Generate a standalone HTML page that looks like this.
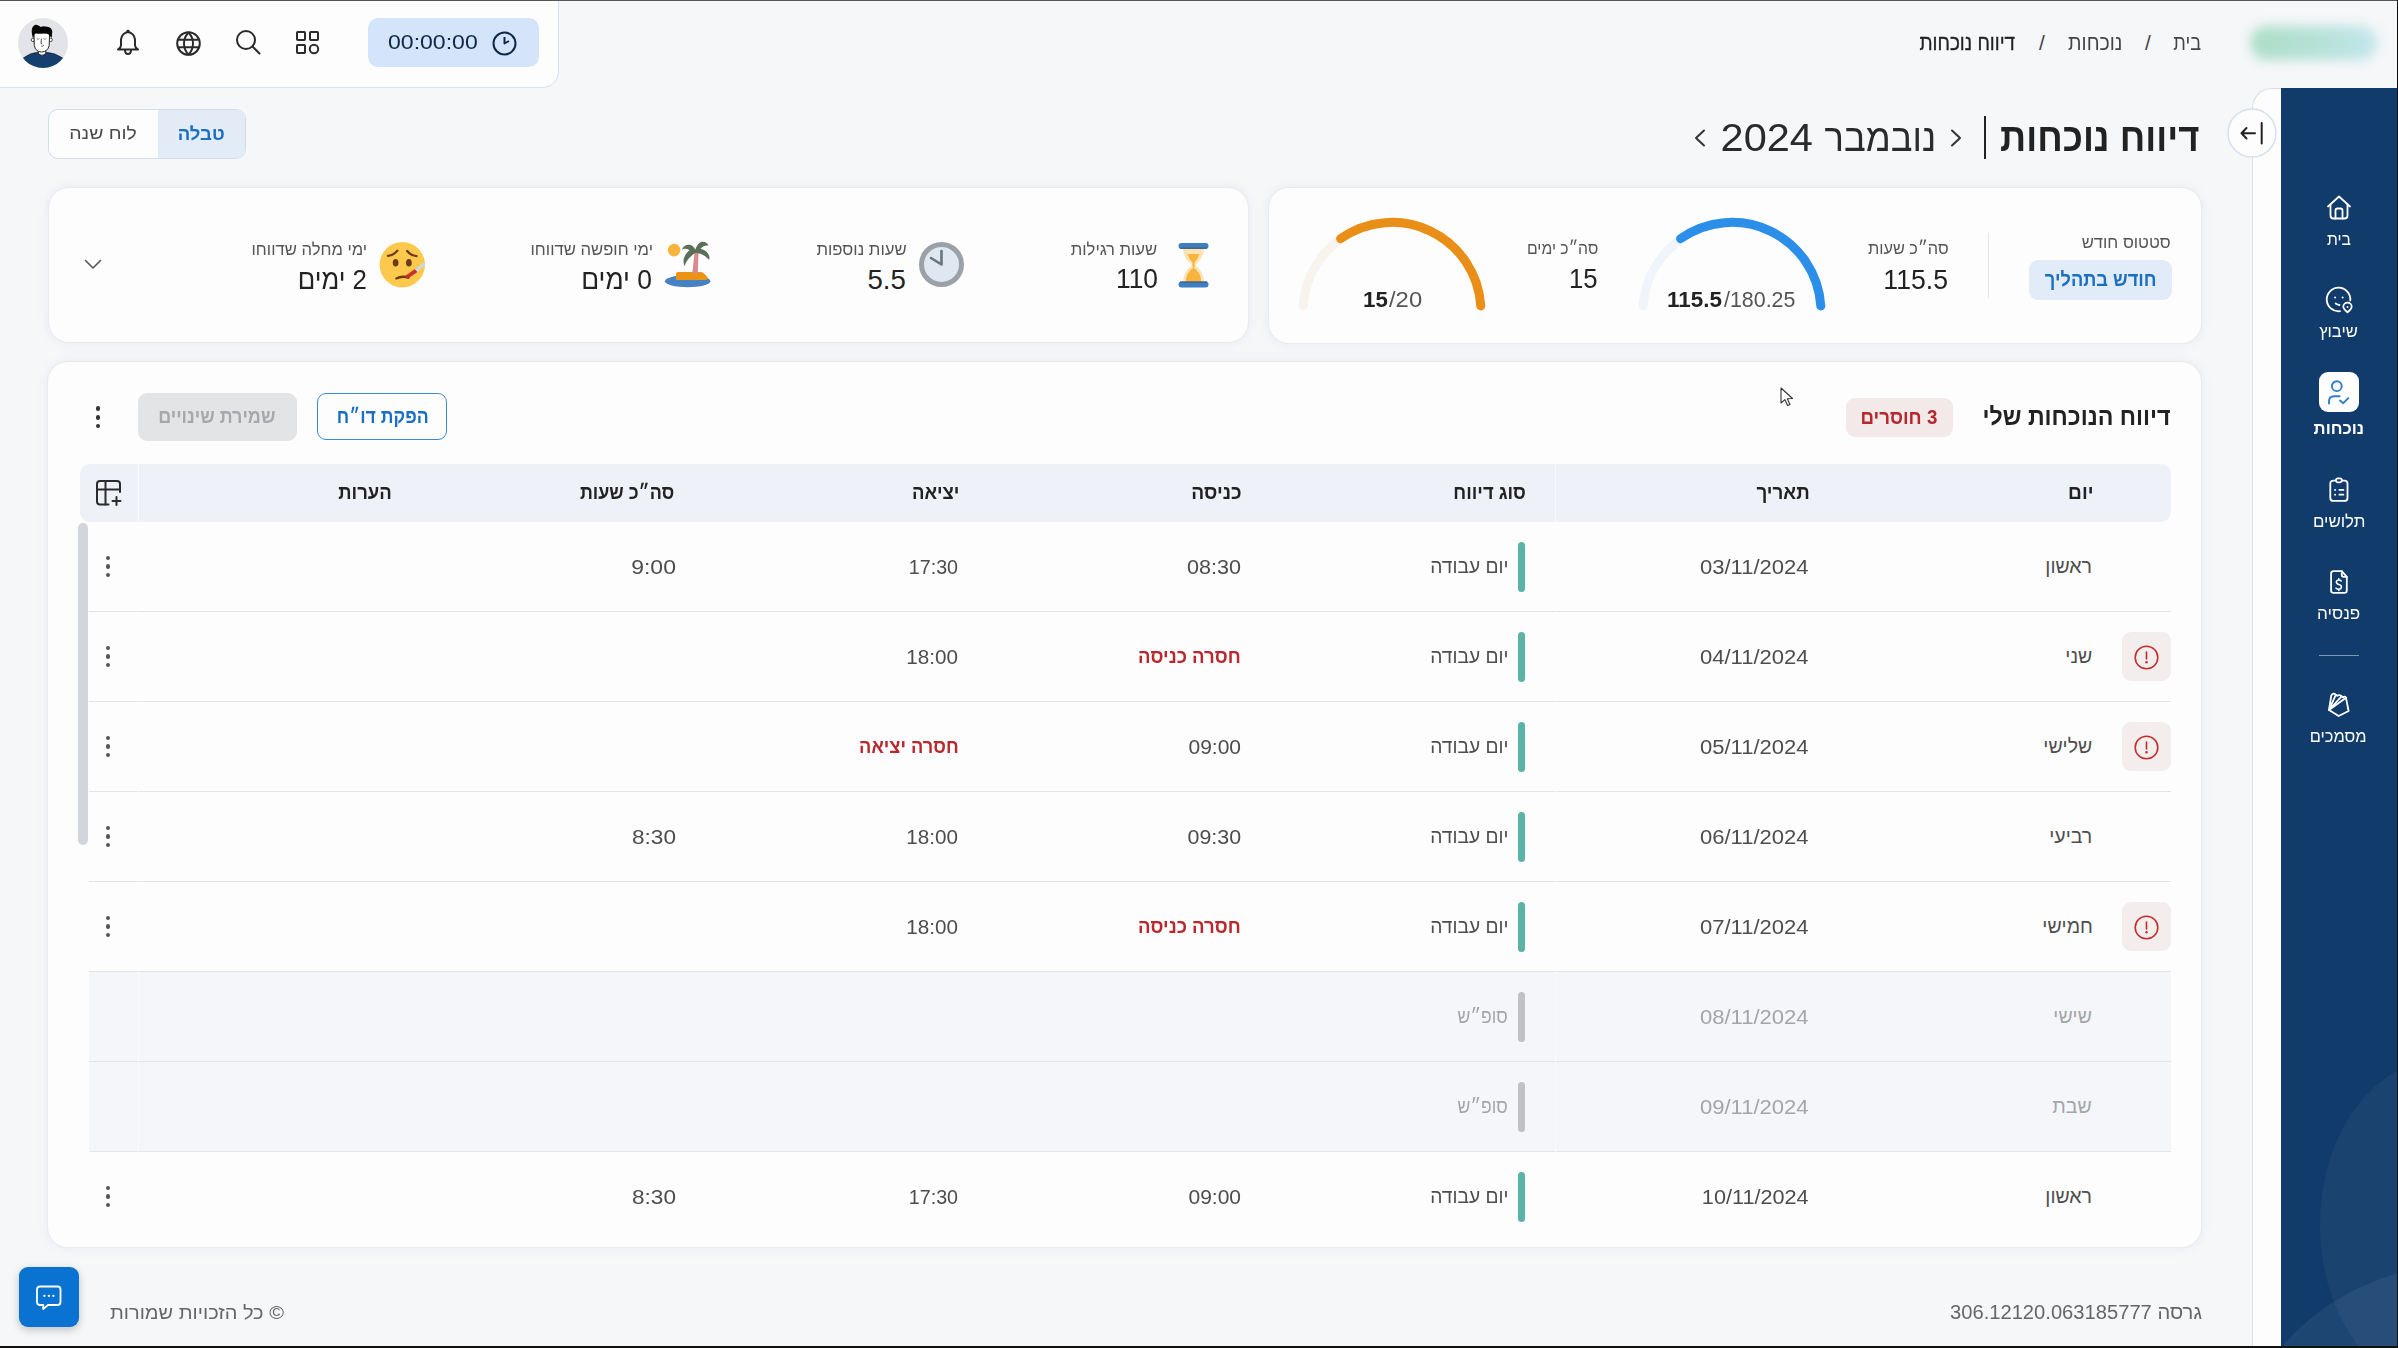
<!DOCTYPE html>
<html lang="he">
<head>
<meta charset="utf-8">
<style>
html,body{margin:0;padding:0;}
body{width:2398px;height:1348px;position:relative;overflow:hidden;background:#f5f7f9;font-family:"Liberation Sans",sans-serif;color:#222;}
.a{position:absolute;}
.t{position:absolute;white-space:nowrap;line-height:1;}
.card{position:absolute;background:#fdfdfe;border-radius:20px;box-shadow:0 0 0 1px rgba(226,230,236,0.6),0 0 8px 2px rgba(200,205,215,0.22);}
svg{position:absolute;overflow:visible;}
</style>
</head>
<body>
<div class="a" style="left:0;top:0;width:2398px;height:1px;background:#555;z-index:50"></div>
<div class="a" style="left:0;top:1346px;width:2398px;height:2px;background:#111;z-index:50"></div>
<div class="a" style="left:2397px;top:0;width:1px;height:1348px;background:#111;z-index:50"></div>
<div class="a" style="left:-2px;top:-2px;width:559px;height:88px;background:#fdfdfe;border:1px solid #dbe3ec;border-bottom-right-radius:16px;"></div>
<svg style="left:18px;top:18px" width="50" height="50" viewBox="0 0 50 50">
<circle cx="25" cy="25" r="25" fill="#e3e4e7"/>
<clipPath id="avc"><circle cx="25" cy="25" r="25"/></clipPath>
<g clip-path="url(#avc)">
<path d="M4.5 40.5 Q12 34.5 20.4 34.2 L24 38.5 L27.7 34.2 Q37 34.5 45.5 40.5 L46 55 L4 55 Z" fill="#14406f" stroke="#111" stroke-width="0.6"/>
<path d="M20.4 32 V35.5 Q24 39 27.7 35.5 V32 Z" fill="#fff" stroke="#111" stroke-width="0.8"/>
<circle cx="14.9" cy="21.9" r="1.7" fill="#fff" stroke="#111" stroke-width="0.7"/><circle cx="32.6" cy="21.9" r="1.7" fill="#fff" stroke="#111" stroke-width="0.7"/>
<path d="M16 15 L16.3 27.5 Q17.5 33.8 23.5 34 Q29.8 33.8 31.2 27.5 L31.6 15 Z" fill="#fff" stroke="#111" stroke-width="0.9"/>
<path d="M14.7 19.5 Q13.3 14 13.9 11.3 Q14.5 8.3 15.6 7.9 Q17 6.5 19 6.9 Q21 7.2 22.9 8.9 Q24.8 8 26.7 8.4 Q29 8.3 30.6 8.9 Q33 9.8 33.5 11.3 Q34.6 13 34.2 15.1 Q34 18 33.5 20 Q32 17.5 30.6 16.5 Q28.5 15 26 15.2 Q22.5 15.8 20 15.5 Q17.8 15 17 15.5 Q15.8 17 15.5 19.5 Z" fill="#050505"/>
<path d="M18.8 20.2 l1.3 1.4 l1.1 -1.2 M25.6 20.2 l1.3 1.4 l1.1 -1.2" stroke="#444" stroke-width="0.7" fill="none"/>
<path d="M23.4 20.5 L23 25.5 L24.3 26" stroke="#222" stroke-width="0.8" fill="none"/>
<path d="M23.3 28 Q24.3 29 25.8 27.2" stroke="#222" stroke-width="0.8" fill="none"/>
</g></svg>
<svg style="left:116px;top:29px" width="24" height="27" viewBox="0 0 24 27" fill="none" stroke="#2b2b2b" stroke-width="2" stroke-linejoin="round">
<path d="M12 3 Q6 4 5 10.5 L5 16.5 Q4.5 19.5 2 20.5 L22 20.5 Q19.5 19.5 19 16.5 L19 10.5 Q18 4 12 3Z"/><path d="M10.7 2.8 Q12 0.8 13.3 2.8"/>
<path d="M9 21 Q9 25 12 25 Q15 25 15 21"/></svg>
<svg style="left:176px;top:30.5px" width="25" height="25" viewBox="0 0 25 25" fill="none" stroke="#2b2b2b" stroke-width="2" stroke-linejoin="round">
<circle cx="12.5" cy="12.5" r="11.3"/><path d="M12.5 1.5 Q8 6 8 12.5 Q8 19 12.5 23.5 Q17 19 17 12.5 Q17 6 12.5 1.5Z"/><path d="M1.5 8.8 H23.5 M1.5 16.2 H23.5"/></svg>
<svg style="left:235px;top:30px" width="26" height="26" viewBox="0 0 26 26" fill="none" stroke="#2b2b2b" stroke-width="2" stroke-linecap="round">
<circle cx="11" cy="10" r="9"/><path d="M17.5 16.5 L24.5 23.5"/></svg>
<svg style="left:296px;top:31px" width="24" height="24" viewBox="0 0 24 24" fill="none" stroke="#2b2b2b" stroke-width="2">
<rect x="1" y="1" width="8" height="8" rx="0.8"/><rect x="14" y="1" width="8" height="8" rx="0.8"/>
<rect x="1" y="14" width="8" height="8" rx="0.8"/><circle cx="18" cy="18" r="4.2"/></svg>
<div class="a" style="left:368px;top:18px;width:171px;height:49px;background:#d4e5fb;border-radius:10px;"></div>
<div class="t" dir="ltr" style="top:31.76px;font-size:20.6px;font-weight:normal;color:#0f2a47;left:387.68px;transform:scaleX(1.1190);transform-origin:0 50%;">00:00:00</div>
<svg style="left:491.5px;top:30.5px" width="25" height="25" viewBox="0 0 25 25" fill="none" stroke="#0f2a47" stroke-width="2">
<circle cx="12.5" cy="12.5" r="11"/><path d="M12.5 6 V12.5 L17 10" stroke-linejoin="round"/></svg>
<div class="t" dir="rtl" style="top:32.22px;font-size:21px;font-weight:normal;color:#444;right:197.21px;transform:scaleX(0.8656);transform-origin:100% 50%;">בית</div>
<div class="t" dir="ltr" style="top:32.22px;font-size:21px;font-weight:normal;color:#444;right:247.16px;">/</div>
<div class="t" dir="rtl" style="top:32.22px;font-size:21px;font-weight:normal;color:#444;right:275.66px;transform:scaleX(0.9298);transform-origin:100% 50%;">נוכחות</div>
<div class="t" dir="ltr" style="top:32.22px;font-size:21px;font-weight:normal;color:#444;right:353.16px;">/</div>
<div class="t" dir="rtl" style="top:32.22px;font-size:21px;font-weight:normal;color:#222;-webkit-text-stroke:0.3px #222;right:382.60px;transform:scaleX(0.9019);transform-origin:100% 50%;">דיווח נוכחות</div>
<div class="a" style="left:2250px;top:26px;width:128px;height:34px;border-radius:17px;background:linear-gradient(90deg,#a9dcc3,#b6e2dc 70%,#c3e6ee);filter:blur(6px);opacity:0.95"></div>
<div class="a" style="left:2251.5px;top:88px;width:60px;height:1260px;background:#fdfdfe;border-left:1.5px solid #d6dfea;border-top:1.5px solid #d6dfea;border-top-left-radius:20px;"></div>
<div class="a" style="left:2281px;top:88px;width:117px;height:1260px;background:#103b6a;overflow:hidden"><div class="a" style="left:39px;top:972px;width:240px;height:330px;border-radius:50%;background:rgba(255,255,255,0.045)"></div><div class="a" style="left:-56px;top:1177px;width:470px;height:470px;border-radius:50%;background:rgba(255,255,255,0.06)"></div></div>
<svg style="left:2226.5px;top:107.5px" width="50" height="50" viewBox="0 0 50 50">
<circle cx="25" cy="25" r="24" fill="#fdfdfe" stroke="#d6e0ec" stroke-width="1.5"/>
<path d="M14.5 25.3 H28 M19.5 20 L14.5 25.3 L19.5 30.5" fill="none" stroke="#222" stroke-width="2" stroke-linecap="round" stroke-linejoin="round"/>
<path d="M34.7 15 V35.5" stroke="#222" stroke-width="2" stroke-linecap="round"/></svg>
<svg style="left:2326px;top:195px" width="26" height="25" viewBox="0 0 26 25" fill="none" stroke="#fff" stroke-width="1.8" stroke-linecap="round" stroke-linejoin="round">
<path d="M2 11.5 L13 1.5 L24 11.5"/><path d="M4.5 9.5 V20.5 Q4.5 23.5 7.5 23.5 H18.5 Q21.5 23.5 21.5 20.5 V9.5"/>
<path d="M9.5 23.5 V15.5 Q9.5 13.5 11.5 13.5 H14.5 Q16.5 13.5 16.5 15.5 V23.5"/></svg>
<div class="t" dir="rtl" style="top:230.61px;font-size:17px;font-weight:normal;color:#fff;right:46.80px;transform:scaleX(0.9231);transform-origin:100% 50%;">בית</div>
<svg style="left:2326px;top:287px" width="27" height="27" viewBox="0 0 27 27" fill="none" stroke="#fff" stroke-width="1.8" stroke-linecap="round" stroke-linejoin="round">
<path d="M24.3 13.5 A11.8 11.8 0 1 0 14 24.2"/><circle cx="9.1" cy="10.5" r="1" fill="#fff" stroke="none"/><circle cx="16.6" cy="10.5" r="1" fill="#fff" stroke="none"/>
<path d="M9.6 16.4 Q11.5 17.6 13.4 18"/><path d="M21.5 25.3 Q17.3 21.8 17.3 19.8 A4.2 4.2 0 0 1 25.7 19.8 Q25.7 21.8 21.5 25.3Z"/><circle cx="21.5" cy="20" r="0.9" fill="#fff" stroke="none"/></svg>
<div class="t" dir="rtl" style="top:322.79px;font-size:17.5px;font-weight:normal;color:#fff;right:39.73px;transform:scaleX(0.9475);transform-origin:100% 50%;">שיבוץ</div>
<div class="a" style="left:2319px;top:372px;width:40px;height:40px;background:#fff;border-radius:9px;"></div>
<svg style="left:2327px;top:380px" width="24" height="24" viewBox="0 0 24 24" fill="none" stroke="#2f7cc8" stroke-width="1.9" stroke-linecap="round" stroke-linejoin="round">
<circle cx="9.8" cy="6.2" r="4.9"/><path d="M2 23.6 V21.5 Q2 16.2 7.2 16.2 H12.6"/><path d="M13 20.6 L16.3 23.2 L21.3 18.2"/></svg>
<div class="t" dir="rtl" style="top:420.41px;font-size:17px;font-weight:bold;color:#fff;right:33.50px;transform:scaleX(0.9880);transform-origin:100% 50%;">נוכחות</div>
<svg style="left:2327px;top:476px" width="23" height="27" viewBox="0 0 23 27" fill="none" stroke="#fff" stroke-width="1.8" stroke-linecap="round" stroke-linejoin="round">
<rect x="3.3" y="4.6" width="17.2" height="20.3" rx="3"/><rect x="8.9" y="2.3" width="6" height="4" rx="2" fill="#103b6a"/>
<path d="M8 13.9 H8.3 M12.4 13.9 H16.4 M8 18.7 H8.3 M12.4 18.7 H16.4"/></svg>
<div class="t" dir="rtl" style="top:512.79px;font-size:17.5px;font-weight:normal;color:#fff;right:32.64px;transform:scaleX(0.9654);transform-origin:100% 50%;">תלושים</div>
<svg style="left:2327px;top:569px" width="23" height="27" viewBox="0 0 23 27" fill="none" stroke="#fff" stroke-width="1.8" stroke-linecap="round" stroke-linejoin="round">
<path d="M14.8 2.1 H6.5 Q4.1 2.1 4.1 4.5 V21.4 Q4.1 23.8 6.5 23.8 H17.4 Q19.8 23.8 19.8 21.4 V7.8 Z"/><path d="M14.8 2.1 V6 Q14.8 7.8 16.6 7.8 H19.8"/>
<path d="M14.2 12 Q13.4 11 11.8 11 Q9.4 11 9.4 13.1 Q9.4 15 11.8 15.5 Q14.4 16 14.4 18 Q14.4 20.2 11.8 20.2 Q10 20.2 9.1 19.2 M11.8 9.7 V11 M11.8 20.2 V21.5" stroke-width="1.6"/></svg>
<div class="t" dir="rtl" style="top:605.19px;font-size:17.5px;font-weight:normal;color:#fff;right:37.76px;transform:scaleX(0.9767);transform-origin:100% 50%;">פנסיה</div>
<div class="a" style="left:2318.5px;top:654.5px;width:40px;height:1.5px;background:#7d97b8"></div>
<svg style="left:2320px;top:685px" width="40" height="40" viewBox="0 0 40 40" fill="none" stroke="#fff" stroke-width="1.8" stroke-linecap="round" stroke-linejoin="round">
<path d="M9 25 L11.3 10.5 Q13.3 7.3 15.8 9.8 L17.2 10.8 Q19.5 9.2 21.6 11.3 L22.8 12.3 Q24.8 10.6 26 12.8 L28.6 26 L18.7 31 Z"/><path d="M9 25 L15.8 9.8 M9 25 L21.6 11.3 M9 25 L26 12.8"/></svg>
<div class="t" dir="rtl" style="top:727.59px;font-size:17.5px;font-weight:normal;color:#fff;right:31.13px;transform:scaleX(0.9373);transform-origin:100% 50%;">מסמכים</div>
<div class="t" dir="rtl" style="top:118.39px;font-size:39px;font-weight:bold;color:#222;right:198.14px;transform:scaleX(0.9340);transform-origin:100% 50%;">דיווח נוכחות</div>
<div class="a" style="left:1983.5px;top:116px;width:2.6px;height:43px;background:#222"></div>
<svg style="left:1948px;top:128px" width="16" height="20" viewBox="0 0 16 20" fill="none" stroke="#333" stroke-width="2" stroke-linecap="round" stroke-linejoin="round"><path d="M4 2.5 L12 10 L4 17.5"/></svg>
<div class="t" dir="rtl" style="top:118.81px;font-size:38.5px;font-weight:normal;color:#2a2a2a;right:461.61px;transform:scaleX(0.9452);transform-origin:100% 50%;">נובמבר</div>
<div class="t" dir="ltr" style="top:117.96px;font-size:39.5px;font-weight:normal;color:#2a2a2a;right:585.08px;transform:scaleX(1.0506);transform-origin:100% 50%;">2024</div>
<svg style="left:1692px;top:128px" width="16" height="20" viewBox="0 0 16 20" fill="none" stroke="#333" stroke-width="2" stroke-linecap="round" stroke-linejoin="round"><path d="M12 2.5 L4 10 L12 17.5"/></svg>
<div class="a" style="left:47.5px;top:109px;width:196px;height:48px;border:1px solid #d3dde9;border-radius:10px;background:#fdfdfe;overflow:hidden"><div class="a" style="left:109px;top:0;width:88px;height:48px;background:#e2ebf6"></div></div>
<div class="t" dir="rtl" style="top:125.06px;font-size:18px;font-weight:bold;color:#1b6fc3;right:2173.52px;transform:scaleX(1.0295);transform-origin:100% 50%;">טבלה</div>
<div class="t" dir="rtl" style="top:125.49px;font-size:17.5px;font-weight:normal;color:#4a4a4a;right:2261.03px;transform:scaleX(1.1102);transform-origin:100% 50%;">לוח שנה</div>
<div class="card" style="left:1268.5px;top:187.5px;width:932.5px;height:155px;"></div>
<div class="card" style="left:48.5px;top:187.8px;width:1199.7px;height:154.2px;"></div>
<div class="t" dir="rtl" style="top:233.59px;font-size:17.5px;font-weight:normal;color:#555;right:226.99px;transform:scaleX(0.9505);transform-origin:100% 50%;">סטטוס חודש</div>
<div class="a" style="left:2028.5px;top:260px;width:143.5px;height:39.5px;background:#e2ecf8;border-radius:9px;"></div>
<div class="t" dir="rtl" style="top:269.07px;font-size:20px;font-weight:bold;color:#1b6fc3;right:241.23px;transform:scaleX(0.9116);transform-origin:100% 50%;">חודש בתהליך</div>
<div class="a" style="left:1987.8px;top:232.5px;width:1.4px;height:65px;background:#e3e6eb"></div>
<div class="t" dir="rtl" style="top:240.19px;font-size:17.5px;font-weight:normal;color:#555;right:449.83px;transform:scaleX(0.9314);transform-origin:100% 50%;">סה״כ שעות</div>
<div class="t" dir="ltr" style="top:265.60px;font-size:28px;font-weight:normal;color:#222;right:450.25px;transform:scaleX(0.9508);transform-origin:100% 50%;">115.5</div>
<div class="t" dir="rtl" style="top:240.49px;font-size:17.5px;font-weight:normal;color:#555;right:800.15px;transform:scaleX(0.9000);transform-origin:100% 50%;">סה״כ ימים</div>
<div class="t" dir="ltr" style="top:265.32px;font-size:27.5px;font-weight:normal;color:#222;right:800.54px;transform:scaleX(0.9357);transform-origin:100% 50%;">15</div>
<svg style="left:0;top:0" width="2398" height="1348" viewBox="0 0 2398 1348"><path d="M1643.2 305.9 A89 89 0 0 1 1820.8 305.9" fill="none" stroke="#f0f4fb" stroke-width="9" stroke-linecap="round"/><path d="M1680.6 238.7 A89 89 0 0 1 1820.8 305.9" fill="none" stroke="#2b8ee8" stroke-width="9" stroke-linecap="round"/></svg>
<svg style="left:0;top:0" width="2398" height="1348" viewBox="0 0 2398 1348"><path d="M1303.2 305.9 A89 89 0 0 1 1480.8 305.9" fill="none" stroke="#f8f3ec" stroke-width="9" stroke-linecap="round"/><path d="M1340.6 238.7 A89 89 0 0 1 1480.8 305.9" fill="none" stroke="#e98f17" stroke-width="9" stroke-linecap="round"/></svg>
<div class="t" dir="ltr" style="top:288.88px;font-size:22px;font-weight:bold;color:#222;left:1667.18px;transform:scaleX(1.0189);transform-origin:0 50%;">115.5</div>
<div class="t" dir="ltr" style="top:288.88px;font-size:22px;font-weight:normal;color:#555;left:1723.50px;transform:scaleX(0.9726);transform-origin:0 50%;">/180.25</div>
<div class="t" dir="ltr" style="top:289.18px;font-size:22px;font-weight:bold;color:#222;left:1362.69px;transform:scaleX(1.0130);transform-origin:0 50%;">15</div>
<div class="t" dir="ltr" style="top:289.18px;font-size:22px;font-weight:normal;color:#555;left:1388.50px;transform:scaleX(1.0833);transform-origin:0 50%;">/20</div>
<div class="t" dir="rtl" style="top:240.61px;font-size:17px;font-weight:normal;color:#555;right:1240.60px;transform:scaleX(0.9807);transform-origin:100% 50%;">שעות רגילות</div>
<div class="t" dir="ltr" style="top:265.44px;font-size:27.6px;font-weight:normal;color:#222;right:1239.84px;transform:scaleX(0.9561);transform-origin:100% 50%;">110</div>
<div class="t" dir="rtl" style="top:240.61px;font-size:17px;font-weight:normal;color:#555;right:1491.38px;transform:scaleX(0.9846);transform-origin:100% 50%;">שעות נוספות</div>
<div class="t" dir="ltr" style="top:265.84px;font-size:27.6px;font-weight:normal;color:#222;right:1492.14px;">5.5</div>
<div class="t" dir="rtl" style="top:240.61px;font-size:17px;font-weight:normal;color:#555;right:1745.17px;transform:scaleX(0.9797);transform-origin:100% 50%;">ימי חופשה שדווחו</div>
<div class="t" dir="rtl" style="top:265.64px;font-size:27.6px;font-weight:normal;color:#222;right:1745.70px;transform:scaleX(0.9577);transform-origin:100% 50%;">0 ימים</div>
<div class="t" dir="rtl" style="top:240.61px;font-size:17px;font-weight:normal;color:#555;right:2030.82px;transform:scaleX(0.9784);transform-origin:100% 50%;">ימי מחלה שדווחו</div>
<div class="t" dir="rtl" style="top:265.64px;font-size:27.6px;font-weight:normal;color:#222;right:2031.12px;transform:scaleX(0.9352);transform-origin:100% 50%;">2 ימים</div>
<svg style="left:84px;top:259px" width="18" height="11" viewBox="0 0 18 11" fill="none" stroke="#555" stroke-width="1.6" stroke-linecap="round" stroke-linejoin="round"><path d="M1.5 1.5 L9 9 L16.5 1.5"/></svg>
<svg style="left:1178px;top:242px" width="31" height="46" viewBox="0 0 31 46">
<path d="M5 5 H26 Q26 16 17.5 22.5 V23.5 Q26 30 26 41 H5 Q5 30 13.5 23.5 V22.5 Q5 16 5 5Z" fill="#fbe3b4"/>
<path d="M9.5 12 H21.5 Q20 17 16.5 20.5 V25 L15.5 26 L14.5 25 V20.5 Q11 17 9.5 12Z" fill="#f8b43d"/>
<path d="M15.5 25.5 Q23.5 31 23 40 H8 Q7.5 31 15.5 25.5Z" fill="#f8b43d"/>
<rect x="0.5" y="1" width="30" height="6" rx="3" fill="#3d7ec4"/><rect x="0.5" y="39.5" width="30" height="6" rx="3" fill="#3d7ec4"/>
<rect x="2" y="5.5" width="27" height="1.2" fill="#4a5d70"/><rect x="2" y="39.5" width="27" height="1.2" fill="#4a5d70"/></svg>
<svg style="left:919px;top:242px" width="45" height="45" viewBox="0 0 45 45">
<circle cx="22.5" cy="22.5" r="20" fill="#dfe7f0" stroke="#9aa1a8" stroke-width="5"/>
<path d="M22.5 22.5 V9 M22.5 22.5 L12 16" stroke="#66757f" stroke-width="2.6" stroke-linecap="round"/></svg>
<svg style="left:655px;top:235px" width="65" height="60" viewBox="0 0 65 60">
<circle cx="19.1" cy="15.1" r="6.3" fill="#f7b53c"/>
<ellipse cx="32.7" cy="46.2" rx="22.7" ry="6.1" fill="#4681c3"/>
<path d="M21 45 V38.5 Q21 37 23 37 H45.5 Q50 37.5 53 43.5 Q52.5 45 50 45 Z" fill="#ec9314"/>
<path d="M37.3 38.5 L39.6 17.5 L43.5 17.5 L42.8 38.5 Z" fill="#d98b8b"/>
<path d="M41 15.5 Q37.5 8.8 33 9.8 Q28.5 10.5 27 14.5 Q31 12.8 34.5 15.2 Q28.5 20 28.5 26.5 Q28.8 29.5 29.6 31.2 Q32 22.5 41 17.8 Z" fill="#5c6f58"/>
<path d="M40 15.5 Q42.5 7.5 47.2 6.8 Q51.5 6.5 53.5 10.5 Q48.5 10 45.5 13.8 Q52 15 54.3 21 Q54.6 23 54.1 24.8 Q49 18.5 40.5 17.8 Z" fill="#5c6f58"/></svg>
<svg style="left:372px;top:235px" width="60" height="60" viewBox="0 0 60 60">
<circle cx="30.3" cy="29.8" r="22.7" fill="#fdc94d"/>
<path d="M16 20.9 Q22 20 25.4 15.6 M35.2 16 Q38.5 20.5 44.5 21.1" fill="none" stroke="#6b3b17" stroke-width="2.3" stroke-linecap="round"/>
<ellipse cx="23.6" cy="27.8" rx="2.9" ry="3.8" fill="#6b3b20"/><ellipse cx="36.9" cy="27.8" rx="2.9" ry="3.8" fill="#6b3b20"/>
<path d="M24.3 43.4 Q30 40.5 36.5 42.7" fill="none" stroke="#6b3b17" stroke-width="2.3" stroke-linecap="round"/>
<path d="M33 41 L43 34 L45.5 37 L35.5 43.8 Z" fill="#c9302c"/><path d="M43 34 L51.5 27.5 L53.5 30 L45.5 37 Z" fill="#d3d6d9"/></svg>
<div class="card" style="left:48.4px;top:362px;width:2152.6px;height:885px;"></div>
<div class="t" dir="rtl" style="top:405.16px;font-size:24.5px;font-weight:bold;color:#222;right:227.28px;transform:scaleX(0.9469);transform-origin:100% 50%;">דיווח הנוכחות שלי</div>
<div class="a" style="left:1846px;top:397.7px;width:106.7px;height:39px;background:#f3e9e9;border-radius:9px;"></div>
<div class="t" dir="rtl" style="top:407.25px;font-size:20.5px;font-weight:bold;color:#b5292e;right:460.41px;transform:scaleX(0.9120);transform-origin:100% 50%;">3 חוסרים</div>
<div class="a" style="left:317.2px;top:392.6px;width:128.3px;height:45.7px;border:1.5px solid #3a8ad8;border-radius:9px;"></div>
<div class="t" dir="rtl" style="top:406.47px;font-size:20px;font-weight:bold;color:#1b6fc3;right:1969.48px;transform:scaleX(0.8863);transform-origin:100% 50%;">הפקת דו״ח</div>
<div class="a" style="left:138.3px;top:392.6px;width:158.5px;height:48.7px;background:#e3e4e6;border-radius:9px;"></div>
<div class="t" dir="rtl" style="top:406.47px;font-size:20px;font-weight:bold;color:#a6a8ab;right:2122.46px;transform:scaleX(0.8992);transform-origin:100% 50%;">שמירת שינויים</div>
<div class="a" style="left:96px;top:406.3px;width:4.4px;height:4.4px;border-radius:50%;background:#333"></div>
<div class="a" style="left:96px;top:415.3px;width:4.4px;height:4.4px;border-radius:50%;background:#333"></div>
<div class="a" style="left:96px;top:424.1px;width:4.4px;height:4.4px;border-radius:50%;background:#333"></div>
<div class="a" style="left:79.5px;top:463.5px;width:2091.5px;height:58.2px;background:#eef2f8;border-radius:10px;"></div>
<div class="t" dir="rtl" style="top:481.87px;font-size:20px;font-weight:bold;color:#222;right:304.58px;transform:scaleX(0.9583);transform-origin:100% 50%;">יום</div>
<div class="t" dir="rtl" style="top:481.87px;font-size:20px;font-weight:bold;color:#222;right:588.41px;transform:scaleX(0.9400);transform-origin:100% 50%;">תאריך</div>
<div class="t" dir="rtl" style="top:481.87px;font-size:20px;font-weight:bold;color:#222;right:872.38px;transform:scaleX(0.9195);transform-origin:100% 50%;">סוג דיווח</div>
<div class="t" dir="rtl" style="top:481.87px;font-size:20px;font-weight:bold;color:#222;right:1156.52px;transform:scaleX(0.9588);transform-origin:100% 50%;">כניסה</div>
<div class="t" dir="rtl" style="top:481.87px;font-size:20px;font-weight:bold;color:#222;right:1438.70px;transform:scaleX(0.9245);transform-origin:100% 50%;">יציאה</div>
<div class="t" dir="rtl" style="top:481.87px;font-size:20px;font-weight:bold;color:#222;right:1723.28px;transform:scaleX(0.8962);transform-origin:100% 50%;">סה״כ שעות</div>
<div class="t" dir="rtl" style="top:481.87px;font-size:20px;font-weight:bold;color:#222;right:2006.26px;transform:scaleX(0.9263);transform-origin:100% 50%;">הערות</div>
<svg style="left:95px;top:479px" width="28" height="28" viewBox="0 0 28 28" fill="none" stroke="#2b2b2b" stroke-width="2" stroke-linecap="round">
<path d="M13.5 25.5 H5 Q2 25.5 2 22.5 V5 Q2 2 5 2 H22 Q25 2 25 5 V13"/><path d="M2 10.5 H25 M10.5 2 V25.5"/><path d="M21.5 18 V26 M17.5 22 H25.5"/></svg>
<div class="a" style="left:89px;top:971.5px;width:2082px;height:179.7px;background:#f5f6f9;"></div>
<div class="a" style="left:89px;top:610.55px;width:2082px;height:1.5px;background:#e1e5ea"></div>
<div class="a" style="left:89px;top:700.55px;width:2082px;height:1.5px;background:#e1e5ea"></div>
<div class="a" style="left:89px;top:790.55px;width:2082px;height:1.5px;background:#e1e5ea"></div>
<div class="a" style="left:89px;top:880.55px;width:2082px;height:1.5px;background:#e1e5ea"></div>
<div class="a" style="left:89px;top:970.55px;width:2082px;height:1.5px;background:#e1e5ea"></div>
<div class="a" style="left:89px;top:1060.55px;width:2082px;height:1.5px;background:#e1e5ea"></div>
<div class="a" style="left:89px;top:1150.55px;width:2082px;height:1.5px;background:#e1e5ea"></div>
<div class="a" style="left:137.8px;top:463.5px;width:1.2px;height:58.2px;background:#f8f9fb"></div>
<div class="a" style="left:137.8px;top:971px;width:1.2px;height:181px;background:#f9fafc"></div>
<div class="a" style="left:137.8px;top:610.3px;width:1.2px;height:2px;background:#f8f9fb"></div>
<div class="a" style="left:137.8px;top:700.3px;width:1.2px;height:2px;background:#f8f9fb"></div>
<div class="a" style="left:137.8px;top:790.3px;width:1.2px;height:2px;background:#f8f9fb"></div>
<div class="a" style="left:137.8px;top:880.3px;width:1.2px;height:2px;background:#f8f9fb"></div>
<div class="a" style="left:137.8px;top:970.3px;width:1.2px;height:2px;background:#f8f9fb"></div>
<div class="a" style="left:137.8px;top:1060.3px;width:1.2px;height:2px;background:#f8f9fb"></div>
<div class="a" style="left:137.8px;top:1150.3px;width:1.2px;height:2px;background:#f8f9fb"></div>
<div class="a" style="left:1554.8px;top:463.5px;width:1.2px;height:58.2px;background:#f8f9fb"></div>
<div class="a" style="left:1554.8px;top:971px;width:1.2px;height:181px;background:#f9fafc"></div>
<div class="a" style="left:1554.8px;top:610.3px;width:1.2px;height:2px;background:#f8f9fb"></div>
<div class="a" style="left:1554.8px;top:700.3px;width:1.2px;height:2px;background:#f8f9fb"></div>
<div class="a" style="left:1554.8px;top:790.3px;width:1.2px;height:2px;background:#f8f9fb"></div>
<div class="a" style="left:1554.8px;top:880.3px;width:1.2px;height:2px;background:#f8f9fb"></div>
<div class="a" style="left:1554.8px;top:970.3px;width:1.2px;height:2px;background:#f8f9fb"></div>
<div class="a" style="left:1554.8px;top:1060.3px;width:1.2px;height:2px;background:#f8f9fb"></div>
<div class="a" style="left:1554.8px;top:1150.3px;width:1.2px;height:2px;background:#f8f9fb"></div>
<div class="a" style="left:78px;top:523px;width:10px;height:322px;background:#d2d5db;border-radius:5px;"></div>
<div class="t" dir="rtl" style="top:556.99px;font-size:19.5px;font-weight:normal;color:#4d4d4d;right:306.06px;">ראשון</div>
<div class="t" dir="ltr" style="top:556.57px;font-size:20px;font-weight:normal;color:#4d4d4d;right:589.31px;transform:scaleX(1.1020);transform-origin:100% 50%;">03/11/2024</div>
<div class="a" style="left:1517.8px;top:542px;width:7.7px;height:50px;background:#5bb3a5;border-radius:4px;"></div>
<div class="t" dir="rtl" style="top:556.99px;font-size:19.5px;font-weight:normal;color:#4d4d4d;right:889.27px;transform:scaleX(0.9844);transform-origin:100% 50%;">יום עבודה</div>
<div class="t" dir="ltr" style="top:556.57px;font-size:20px;font-weight:normal;color:#4d4d4d;right:1157.03px;transform:scaleX(1.0780);transform-origin:100% 50%;">08:30</div>
<div class="t" dir="ltr" style="top:556.57px;font-size:20px;font-weight:normal;color:#4d4d4d;right:1439.84px;transform:scaleX(0.9837);transform-origin:100% 50%;">17:30</div>
<div class="t" dir="ltr" style="top:556.57px;font-size:20px;font-weight:normal;color:#4d4d4d;right:1722.12px;transform:scaleX(1.1486);transform-origin:100% 50%;">9:00</div>
<div class="a" style="left:105.7px;top:555.5px;width:4.6px;height:4.6px;border-radius:50%;background:#555"></div>
<div class="a" style="left:105.7px;top:564.3px;width:4.6px;height:4.6px;border-radius:50%;background:#555"></div>
<div class="a" style="left:105.7px;top:572.9px;width:4.6px;height:4.6px;border-radius:50%;background:#555"></div>
<div class="a" style="left:2122px;top:631.5px;width:49px;height:49px;background:#f3eded;border-radius:9px;"></div>
<svg style="left:2134px;top:644.5px" width="25" height="25" viewBox="0 0 25 25" fill="none" stroke="#c0302e" stroke-width="1.6"><circle cx="12.5" cy="12.5" r="11.3"/><path d="M12.5 7 V14" stroke-linecap="round"/><circle cx="12.5" cy="17.3" r="0.5" fill="#c0302e"/></svg>
<div class="t" dir="rtl" style="top:646.99px;font-size:19.5px;font-weight:normal;color:#4d4d4d;right:305.81px;">שני</div>
<div class="t" dir="ltr" style="top:646.57px;font-size:20px;font-weight:normal;color:#4d4d4d;right:589.31px;transform:scaleX(1.1020);transform-origin:100% 50%;">04/11/2024</div>
<div class="a" style="left:1517.8px;top:632px;width:7.7px;height:50px;background:#5bb3a5;border-radius:4px;"></div>
<div class="t" dir="rtl" style="top:646.99px;font-size:19.5px;font-weight:normal;color:#4d4d4d;right:889.27px;transform:scaleX(0.9844);transform-origin:100% 50%;">יום עבודה</div>
<div class="t" dir="rtl" style="top:646.99px;font-size:19.5px;font-weight:bold;color:#b8282c;right:1156.93px;transform:scaleX(0.9528);transform-origin:100% 50%;">חסרה כניסה</div>
<div class="t" dir="ltr" style="top:646.57px;font-size:20px;font-weight:normal;color:#4d4d4d;right:1439.84px;transform:scaleX(1.0327);transform-origin:100% 50%;">18:00</div>
<div class="a" style="left:105.7px;top:645.5px;width:4.6px;height:4.6px;border-radius:50%;background:#555"></div>
<div class="a" style="left:105.7px;top:654.3px;width:4.6px;height:4.6px;border-radius:50%;background:#555"></div>
<div class="a" style="left:105.7px;top:662.9px;width:4.6px;height:4.6px;border-radius:50%;background:#555"></div>
<div class="a" style="left:2122px;top:721.5px;width:49px;height:49px;background:#f3eded;border-radius:9px;"></div>
<svg style="left:2134px;top:734.5px" width="25" height="25" viewBox="0 0 25 25" fill="none" stroke="#c0302e" stroke-width="1.6"><circle cx="12.5" cy="12.5" r="11.3"/><path d="M12.5 7 V14" stroke-linecap="round"/><circle cx="12.5" cy="17.3" r="0.5" fill="#c0302e"/></svg>
<div class="t" dir="rtl" style="top:736.99px;font-size:19.5px;font-weight:normal;color:#4d4d4d;right:305.76px;">שלישי</div>
<div class="t" dir="ltr" style="top:736.57px;font-size:20px;font-weight:normal;color:#4d4d4d;right:589.31px;transform:scaleX(1.1020);transform-origin:100% 50%;">05/11/2024</div>
<div class="a" style="left:1517.8px;top:722px;width:7.7px;height:50px;background:#5bb3a5;border-radius:4px;"></div>
<div class="t" dir="rtl" style="top:736.99px;font-size:19.5px;font-weight:normal;color:#4d4d4d;right:889.27px;transform:scaleX(0.9844);transform-origin:100% 50%;">יום עבודה</div>
<div class="t" dir="ltr" style="top:736.57px;font-size:20px;font-weight:normal;color:#4d4d4d;right:1157.03px;transform:scaleX(1.0500);transform-origin:100% 50%;">09:00</div>
<div class="t" dir="rtl" style="top:736.99px;font-size:19.5px;font-weight:bold;color:#b8282c;right:1439.30px;transform:scaleX(0.9333);transform-origin:100% 50%;">חסרה יציאה</div>
<div class="a" style="left:105.7px;top:735.5px;width:4.6px;height:4.6px;border-radius:50%;background:#555"></div>
<div class="a" style="left:105.7px;top:744.3px;width:4.6px;height:4.6px;border-radius:50%;background:#555"></div>
<div class="a" style="left:105.7px;top:752.9px;width:4.6px;height:4.6px;border-radius:50%;background:#555"></div>
<div class="t" dir="rtl" style="top:826.99px;font-size:19.5px;font-weight:normal;color:#4d4d4d;right:305.72px;">רביעי</div>
<div class="t" dir="ltr" style="top:826.57px;font-size:20px;font-weight:normal;color:#4d4d4d;right:589.31px;transform:scaleX(1.1020);transform-origin:100% 50%;">06/11/2024</div>
<div class="a" style="left:1517.8px;top:812px;width:7.7px;height:50px;background:#5bb3a5;border-radius:4px;"></div>
<div class="t" dir="rtl" style="top:826.99px;font-size:19.5px;font-weight:normal;color:#4d4d4d;right:889.27px;transform:scaleX(0.9844);transform-origin:100% 50%;">יום עבודה</div>
<div class="t" dir="ltr" style="top:826.57px;font-size:20px;font-weight:normal;color:#4d4d4d;right:1157.03px;transform:scaleX(1.0700);transform-origin:100% 50%;">09:30</div>
<div class="t" dir="ltr" style="top:826.57px;font-size:20px;font-weight:normal;color:#4d4d4d;right:1439.84px;transform:scaleX(1.0327);transform-origin:100% 50%;">18:00</div>
<div class="t" dir="ltr" style="top:826.57px;font-size:20px;font-weight:normal;color:#4d4d4d;right:1722.14px;transform:scaleX(1.1270);transform-origin:100% 50%;">8:30</div>
<div class="a" style="left:105.7px;top:825.5px;width:4.6px;height:4.6px;border-radius:50%;background:#555"></div>
<div class="a" style="left:105.7px;top:834.3px;width:4.6px;height:4.6px;border-radius:50%;background:#555"></div>
<div class="a" style="left:105.7px;top:842.9px;width:4.6px;height:4.6px;border-radius:50%;background:#555"></div>
<div class="a" style="left:2122px;top:901.5px;width:49px;height:49px;background:#f3eded;border-radius:9px;"></div>
<svg style="left:2134px;top:914.5px" width="25" height="25" viewBox="0 0 25 25" fill="none" stroke="#c0302e" stroke-width="1.6"><circle cx="12.5" cy="12.5" r="11.3"/><path d="M12.5 7 V14" stroke-linecap="round"/><circle cx="12.5" cy="17.3" r="0.5" fill="#c0302e"/></svg>
<div class="t" dir="rtl" style="top:916.99px;font-size:19.5px;font-weight:normal;color:#4d4d4d;right:305.09px;">חמישי</div>
<div class="t" dir="ltr" style="top:916.57px;font-size:20px;font-weight:normal;color:#4d4d4d;right:589.31px;transform:scaleX(1.1020);transform-origin:100% 50%;">07/11/2024</div>
<div class="a" style="left:1517.8px;top:902px;width:7.7px;height:50px;background:#5bb3a5;border-radius:4px;"></div>
<div class="t" dir="rtl" style="top:916.99px;font-size:19.5px;font-weight:normal;color:#4d4d4d;right:889.27px;transform:scaleX(0.9844);transform-origin:100% 50%;">יום עבודה</div>
<div class="t" dir="rtl" style="top:916.99px;font-size:19.5px;font-weight:bold;color:#b8282c;right:1156.93px;transform:scaleX(0.9528);transform-origin:100% 50%;">חסרה כניסה</div>
<div class="t" dir="ltr" style="top:916.57px;font-size:20px;font-weight:normal;color:#4d4d4d;right:1439.84px;transform:scaleX(1.0327);transform-origin:100% 50%;">18:00</div>
<div class="a" style="left:105.7px;top:915.5px;width:4.6px;height:4.6px;border-radius:50%;background:#555"></div>
<div class="a" style="left:105.7px;top:924.3px;width:4.6px;height:4.6px;border-radius:50%;background:#555"></div>
<div class="a" style="left:105.7px;top:932.9px;width:4.6px;height:4.6px;border-radius:50%;background:#555"></div>
<div class="t" dir="rtl" style="top:1006.99px;font-size:19.5px;font-weight:normal;color:#a3a5a8;right:306.09px;">שישי</div>
<div class="t" dir="ltr" style="top:1006.57px;font-size:20px;font-weight:normal;color:#a3a5a8;right:589.31px;transform:scaleX(1.1020);transform-origin:100% 50%;">08/11/2024</div>
<div class="a" style="left:1517.8px;top:992px;width:7.7px;height:50px;background:#c0c1c4;border-radius:4px;"></div>
<div class="t" dir="rtl" style="top:1006.99px;font-size:19.5px;font-weight:normal;color:#a3a5a8;right:890.42px;transform:scaleX(0.9000);transform-origin:100% 50%;">סופ״ש</div>
<div class="t" dir="rtl" style="top:1096.99px;font-size:19.5px;font-weight:normal;color:#a3a5a8;right:306.32px;">שבת</div>
<div class="t" dir="ltr" style="top:1096.57px;font-size:20px;font-weight:normal;color:#a3a5a8;right:589.31px;transform:scaleX(1.1020);transform-origin:100% 50%;">09/11/2024</div>
<div class="a" style="left:1517.8px;top:1082px;width:7.7px;height:50px;background:#c0c1c4;border-radius:4px;"></div>
<div class="t" dir="rtl" style="top:1096.99px;font-size:19.5px;font-weight:normal;color:#a3a5a8;right:890.42px;transform:scaleX(0.9000);transform-origin:100% 50%;">סופ״ש</div>
<div class="t" dir="rtl" style="top:1186.99px;font-size:19.5px;font-weight:normal;color:#4d4d4d;right:306.06px;">ראשון</div>
<div class="t" dir="ltr" style="top:1186.57px;font-size:20px;font-weight:normal;color:#4d4d4d;right:589.32px;transform:scaleX(1.0825);transform-origin:100% 50%;">10/11/2024</div>
<div class="a" style="left:1517.8px;top:1172px;width:7.7px;height:50px;background:#5bb3a5;border-radius:4px;"></div>
<div class="t" dir="rtl" style="top:1186.99px;font-size:19.5px;font-weight:normal;color:#4d4d4d;right:889.27px;transform:scaleX(0.9844);transform-origin:100% 50%;">יום עבודה</div>
<div class="t" dir="ltr" style="top:1186.57px;font-size:20px;font-weight:normal;color:#4d4d4d;right:1157.03px;transform:scaleX(1.0500);transform-origin:100% 50%;">09:00</div>
<div class="t" dir="ltr" style="top:1186.57px;font-size:20px;font-weight:normal;color:#4d4d4d;right:1439.84px;transform:scaleX(0.9837);transform-origin:100% 50%;">17:30</div>
<div class="t" dir="ltr" style="top:1186.57px;font-size:20px;font-weight:normal;color:#4d4d4d;right:1722.14px;transform:scaleX(1.1270);transform-origin:100% 50%;">8:30</div>
<div class="a" style="left:105.7px;top:1185.5px;width:4.6px;height:4.6px;border-radius:50%;background:#555"></div>
<div class="a" style="left:105.7px;top:1194.3px;width:4.6px;height:4.6px;border-radius:50%;background:#555"></div>
<div class="a" style="left:105.7px;top:1202.9px;width:4.6px;height:4.6px;border-radius:50%;background:#555"></div>
<div class="t" dir="rtl" style="top:1301.77px;font-size:20px;font-weight:normal;color:#666;right:196.48px;transform:scaleX(1.0080);transform-origin:100% 50%;">גרסה 306.12120.063185777</div>
<div class="t" dir="rtl" style="top:1302.52px;font-size:19px;font-weight:normal;color:#666;left:110.00px;transform:scaleX(1.0521);transform-origin:0 50%;">© כל הזכויות שמורות</div>
<div class="a" style="left:19px;top:1267px;width:59.5px;height:59.5px;background:#0a72d0;border-radius:9px;box-shadow:0 3px 8px rgba(0,0,0,0.22)"></div>
<svg style="left:35px;top:1284px" width="28" height="28" viewBox="0 0 28 28" fill="none" stroke="#fff" stroke-width="1.8" stroke-linejoin="round">
<path d="M5 2.5 H22.5 Q25.5 2.5 25.5 5.5 V18 Q25.5 21 22.5 21 H13 L8.2 25 V21 H5 Q2 21 2 18 V5.5 Q2 2.5 5 2.5Z"/><path d="M9.3 11.8 H9.5 M13.8 11.8 H14 M18.3 11.8 H18.5" stroke-width="2.2" stroke-linecap="round"/></svg>
<svg style="left:1780px;top:387px" width="14" height="20" viewBox="0 0 14 20"><path d="M1 1 L1 16 L4.8 12.6 L7.6 18.6 L10 17.5 L7.3 11.7 L12.5 11.5 Z" fill="#fff" stroke="#333" stroke-width="1.1" stroke-linejoin="round"/></svg>
</body>
</html>
